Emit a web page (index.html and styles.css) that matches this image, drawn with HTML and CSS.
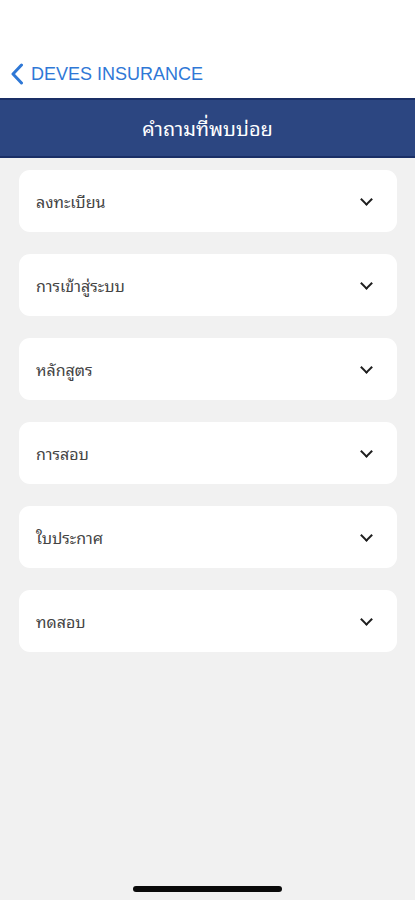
FILE: index.html
```html
<!DOCTYPE html>
<html lang="th">
<head>
    <meta charset="UTF-8">
    <title>คำถามที่พบบ่อย</title>
    <link rel="stylesheet" href="styles.css">
</head>
<body>
<div class="page">
    <div class="top">
        <a class="back" href="#">
            <svg width="14" height="22" viewBox="0 0 14 22">
                <path d="M11.5 2 L3 11 L11.5 20" fill="none" stroke="#2f78d6" stroke-width="3" stroke-linecap="round" stroke-linejoin="round"/>
            </svg>
            <span>DEVES INSURANCE</span>
        </a>
    </div>
    <div class="bar">คำถามที่พบบ่อย</div>

    <ul class="faq">
        <li><span>ลงทะเบียน</span><i class="arrow"></i></li>
        <li><span>การเข้าสู่ระบบ</span><i class="arrow"></i></li>
        <li><span>หลักสูตร</span><i class="arrow"></i></li>
        <li><span>การสอบ</span><i class="arrow"></i></li>
        <li><span>ใบประกาศ</span><i class="arrow"></i></li>
        <li><span>ทดสอบ</span><i class="arrow"></i></li>
    </ul>

    <div class="home"></div>
</div>
</body>
</html>
```

FILE: styles.css
```css
* {
    padding: 0;
    margin: 0;
    box-sizing: border-box;
}

body {
    background: #f1f1f1;
    font-family: "Liberation Sans", "Noto Sans Thai Looped", "Garuda", "Loma", "Noto Sans Thai", sans-serif;
}

.page {
    width: 415px;
    height: 900px;
    display: flex;
    flex-direction: column;
}

.top {
    height: 98px;
    background: #fff;
    display: flex;
    align-items: flex-end;
    padding: 0 0 13px 10px;
}

.back {
    display: flex;
    align-items: center;
    gap: 7px;
    text-decoration: none;
    color: #2f78d6;
    font-size: 18px;
}

.bar {
    height: 60px;
    background: #2c4681;
    border-top: 2px solid #1a2f66;
    border-bottom: 2px solid #1a2f66;
    color: #fff;
    font-size: 20px;
    display: flex;
    align-items: center;
    justify-content: center;
    padding-bottom: 3px;
}

.faq {
    list-style: none;
    padding: 12px 18px 0 19px;
    display: flex;
    flex-direction: column;
    gap: 22px;
}

.faq li {
    height: 62px;
    background: #fff;
    border-radius: 11px;
    display: flex;
    align-items: center;
    justify-content: space-between;
    padding: 0 26px 0 17px;
    font-size: 16px;
    color: #444;
}

.arrow {
    width: 9px;
    height: 9px;
    border-right: 2px solid #1e1e1e;
    border-bottom: 2px solid #1e1e1e;
    transform: rotate(45deg);
    margin-top: -4px;
}

.home {
    margin-top: auto;
    margin-bottom: 8px;
    align-self: center;
    width: 149px;
    height: 6px;
    border-radius: 3px;
    background: #0a0a0a;
}
```
